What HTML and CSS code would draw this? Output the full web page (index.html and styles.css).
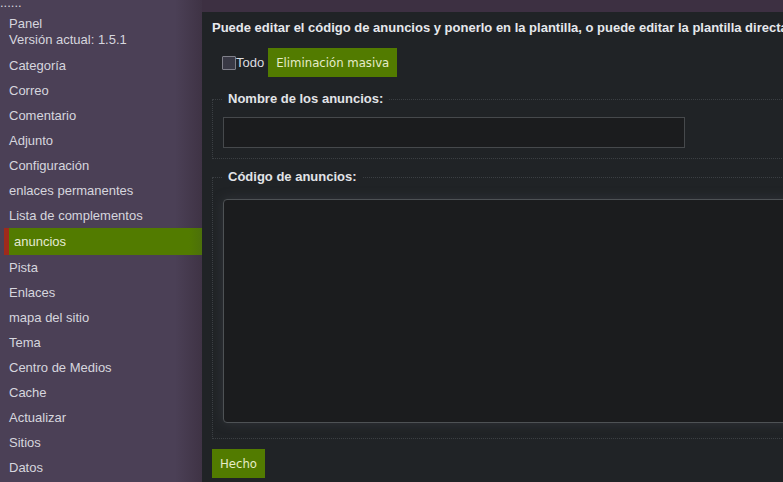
FILE: index.html
```html
<!DOCTYPE html>
<html lang="es">
<head>
<meta charset="utf-8">
<title>anuncios</title>
<link rel="stylesheet" href="styles.css">
</head>
<body>
<div class="layout">
  <nav class="sidebar">
    <div class="dots">......</div>
    <div class="brand">
      <div>Panel</div>
      <div>Versión actual: 1.5.1</div>
    </div>
    <ul class="menu">
      <li>Categoría</li>
      <li>Correo</li>
      <li>Comentario</li>
      <li>Adjunto</li>
      <li>Configuración</li>
      <li>enlaces permanentes</li>
      <li>Lista de complementos</li>
      <li class="active">anuncios</li>
      <li>Pista</li>
      <li>Enlaces</li>
      <li>mapa del sitio</li>
      <li>Tema</li>
      <li>Centro de Medios</li>
      <li>Cache</li>
      <li>Actualizar</li>
      <li>Sitios</li>
      <li>Datos</li>
    </ul>
  </nav>
  <main class="main">
    <section class="panel">
      <p class="intro">Puede editar el código de anuncios y ponerlo en la plantilla, o puede editar la plantilla directamente para insertar los anuncios.</p>
      <div class="toolbar">
        <label class="check"><span class="box"></span>Todo</label>
        <button class="btn">Eliminación masiva</button>
      </div>
      <fieldset class="group">
        <legend>Nombre de los anuncios:</legend>
        <input class="field" type="text">
      </fieldset>
      <fieldset class="group code">
        <legend>Código de anuncios:</legend>
        <textarea class="area"></textarea>
      </fieldset>
      <button class="btn done">Hecho</button>
    </section>
  </main>
</div>
</body>
</html>
```

FILE: styles.css
```css
html, body {
  margin: 0;
  padding: 0;
  height: 100%;
  overflow: hidden;
}
body {
  background: #3d3042;
  font-family: "Liberation Sans", Arial, sans-serif;
  font-size: 13px;
}
.layout {
  display: flex;
  height: 482px;
}
.sidebar {
  width: 202px;
  flex: none;
  background: linear-gradient(to right, #4b4056 0, #4b4056 175px, #3f3345 202px);
  color: #d6d6de;
}
.dots {
  height: 16px;
  line-height: 0;
  padding-top: 3px;
  box-sizing: border-box;
}
.brand {
  padding-left: 9px;
  line-height: 16px;
  margin-bottom: 5px;
}
.menu {
  list-style: none;
  margin: 0;
  padding: 0;
}
.menu li {
  line-height: 25px;
  padding-left: 9px;
  white-space: nowrap;
}
.menu li.active {
  line-height: 27px;
  margin-left: 4px;
  border-left: 5px solid #9e2a1c;
  padding-left: 5px;
  background: linear-gradient(to right, #527b00 0, #527b00 180px, #4c700a 100%);
  color: #e4ead4;
}
.main {
  flex: 1;
  padding-top: 12px;
  overflow: hidden;
}
.panel {
  background: #202326;
  height: 100%;
  width: 900px;
  padding: 8px 10px 0;
  box-sizing: border-box;
}
.intro {
  margin: 0;
  font-weight: bold;
  line-height: 16px;
  color: #e6e8ec;
  white-space: nowrap;
}
.toolbar {
  display: flex;
  align-items: center;
  margin-top: 12px;
  padding-left: 10px;
  color: #dcdde0;
}
.check {
  display: flex;
  align-items: center;
  margin-right: 4px;
}
.box {
  width: 12px;
  height: 12px;
  border: 1px solid #80808a;
  border-radius: 1px;
  background: #393945;
}
.btn {
  background: #527b00;
  color: #e6ecc8;
  border: none;
  font-family: "DejaVu Sans", sans-serif;
  font-stretch: condensed;
  font-size: 13px;
  height: 29px;
  padding: 0 8px;
  margin: 0;
}
.group {
  border: 1px dotted #3b3f43;
  margin: 14px 0 0;
  padding: 10px 10px 10px 10px;
}
.group legend {
  font-weight: bold;
  color: #e2e4e8;
  padding: 0 5px;
  margin-left: 0;
  line-height: 16px;
}
.field {
  display: block;
  width: 462px;
  height: 31px;
  box-sizing: border-box;
  margin: 0;
  background: #1b1c1e;
  border: 1px solid #46494c;
  color: #ddd;
}
.group.code {
  margin-top: 10px;
  padding-top: 14px;
  padding-bottom: 15px;
}
.area {
  display: block;
  width: 620px;
  height: 224px;
  box-sizing: border-box;
  margin: 0;
  background: #1b1c1e;
  border: 1px solid #4e5255;
  border-radius: 4px;
  box-shadow: 0 0 12px rgba(70, 76, 82, 0.45);
  resize: none;
}
.done {
  margin-top: 10px;
}
```
